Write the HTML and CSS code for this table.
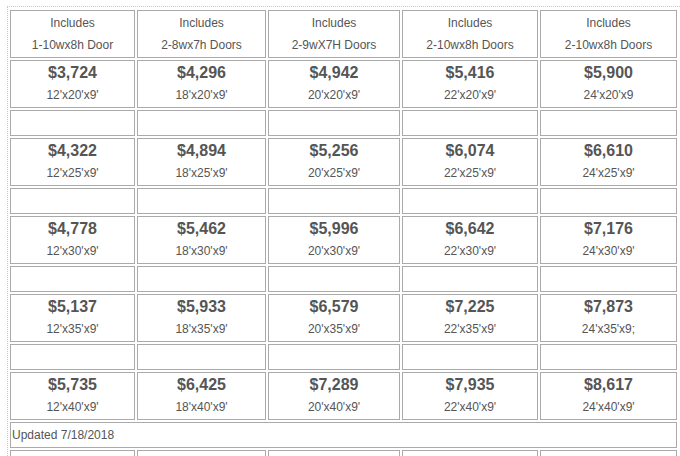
FILE: index.html
```html
<!DOCTYPE html>
<html>
<head>
<meta charset="utf-8">
<link rel="stylesheet" href="styles.css">
</head>
<body>
<div class="wrap">
<table class="prices">
<tr class="head">
<td class="c1">Includes<br>1-10wx8h Door</td>
<td class="c2">Includes<br>2-8wx7h Doors</td>
<td class="c3">Includes<br>2-9wX7H Doors</td>
<td class="c4">Includes<br>2-10wx8h Doors</td>
<td class="c5">Includes<br>2-10wx8h Doors</td>
</tr>
<tr class="price">
<td><div class="amt">$3,724</div><div>12'x20'x9'</div></td>
<td><div class="amt">$4,296</div><div>18'x20'x9'</div></td>
<td><div class="amt">$4,942</div><div>20'x20'x9'</div></td>
<td><div class="amt">$5,416</div><div>22'x20'x9'</div></td>
<td><div class="amt">$5,900</div><div>24'x20'x9</div></td>
</tr>
<tr class="empty"><td></td><td></td><td></td><td></td><td></td></tr>
<tr class="price">
<td><div class="amt">$4,322</div><div>12'x25'x9'</div></td>
<td><div class="amt">$4,894</div><div>18'x25'x9'</div></td>
<td><div class="amt">$5,256</div><div>20'x25'x9'</div></td>
<td><div class="amt">$6,074</div><div>22'x25'x9'</div></td>
<td><div class="amt">$6,610</div><div>24'x25'x9'</div></td>
</tr>
<tr class="empty"><td></td><td></td><td></td><td></td><td></td></tr>
<tr class="price">
<td><div class="amt">$4,778</div><div>12'x30'x9'</div></td>
<td><div class="amt">$5,462</div><div>18'x30'x9'</div></td>
<td><div class="amt">$5,996</div><div>20'x30'x9'</div></td>
<td><div class="amt">$6,642</div><div>22'x30'x9'</div></td>
<td><div class="amt">$7,176</div><div>24'x30'x9'</div></td>
</tr>
<tr class="empty"><td></td><td></td><td></td><td></td><td></td></tr>
<tr class="price">
<td><div class="amt">$5,137</div><div>12'x35'x9'</div></td>
<td><div class="amt">$5,933</div><div>18'x35'x9'</div></td>
<td><div class="amt">$6,579</div><div>20'x35'x9'</div></td>
<td><div class="amt">$7,225</div><div>22'x35'x9'</div></td>
<td><div class="amt">$7,873</div><div>24'x35'x9;</div></td>
</tr>
<tr class="empty"><td></td><td></td><td></td><td></td><td></td></tr>
<tr class="price">
<td><div class="amt">$5,735</div><div>12'x40'x9'</div></td>
<td><div class="amt">$6,425</div><div>18'x40'x9'</div></td>
<td><div class="amt">$7,289</div><div>20'x40'x9'</div></td>
<td><div class="amt">$7,935</div><div>22'x40'x9'</div></td>
<td><div class="amt">$8,617</div><div>24'x40'x9'</div></td>
</tr>
<tr class="note"><td colspan="5">Updated 7/18/2018</td></tr>
<tr class="head"><td></td><td></td><td></td><td></td><td></td></tr>
</table>
</div>
</body>
</html>
```
FILE: styles.css
```css
html, body {
  margin: 0;
  padding: 0;
  overflow: hidden;
  background: #fff;
}
.wrap {
  margin: 6px 0 0 7px;
  border-top: 1px dotted #c8c8c8;
  border-left: 1px dotted #c8c8c8;
  padding-top: 1px;
  height: 460px;
}
.prices {
  border-collapse: separate;
  border-spacing: 2px;
  table-layout: fixed;
  width: 671px;
  font-family: "Liberation Sans", Arial, sans-serif;
  font-size: 12px;
  line-height: 22px;
  color: #555;
}
.prices td {
  box-sizing: border-box;
  border: 1px solid #aaa;
  padding: 1px 0;
  text-align: center;
  vertical-align: middle;
}
.amt {
  font-size: 16px;
  line-height: 22px;
  font-weight: bold;
  color: #555;
}
.c1 { width: 125px; }
.c2 { width: 129px; }
.c3 { width: 132px; }
.c4 { width: 136px; }
.c5 { width: 137px; }
.head td, .price td { height: 48px; }
.empty td { height: 26px; }
.note td {
  height: 26px;
  text-align: left;
  padding-left: 1px;
}
```
